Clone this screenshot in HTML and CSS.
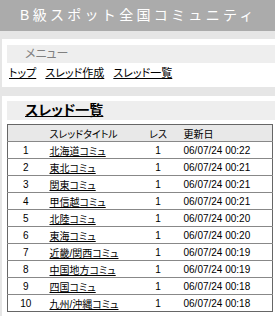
FILE: index.html
```html
<!DOCTYPE html>
<html lang="ja">
<head>
    <meta charset="UTF-8">
    <title>B級スポット全国コミュニティ</title>
    <link rel="stylesheet" href="styles.css">
</head>
<body>
    <h1 class="site-title">B級スポット全国コミュニティ</h1>

    <div class="box menu-box">
        <h2 class="menu-head">メニュー</h2>
        <div class="menu-links">
            <a href="#">トップ</a>
            <a href="#">スレッド作成</a>
            <a href="#">スレッド一覧</a>
        </div>
    </div>

    <div class="box list-box">
        <h2 class="list-head"><a href="#">スレッド一覧</a></h2>
        <table class="threads">
            <colgroup>
                <col class="c-no">
                <col class="c-title">
                <col class="c-res">
                <col class="c-date">
            </colgroup>
            <thead>
                <tr>
                    <th></th>
                    <th class="title">スレッドタイトル</th>
                    <th class="res">レス</th>
                    <th class="date">更新日</th>
                </tr>
            </thead>
            <tbody>
                <tr><td class="no">1</td><td class="title"><a href="#">北海道コミュ</a></td><td class="res">1</td><td class="date">06/07/24 00:22</td></tr>
                <tr><td class="no">2</td><td class="title"><a href="#">東北コミュ</a></td><td class="res">1</td><td class="date">06/07/24 00:21</td></tr>
                <tr><td class="no">3</td><td class="title"><a href="#">関東コミュ</a></td><td class="res">1</td><td class="date">06/07/24 00:21</td></tr>
                <tr><td class="no">4</td><td class="title"><a href="#">甲信越コミュ</a></td><td class="res">1</td><td class="date">06/07/24 00:21</td></tr>
                <tr><td class="no">5</td><td class="title"><a href="#">北陸コミュ</a></td><td class="res">1</td><td class="date">06/07/24 00:20</td></tr>
                <tr><td class="no">6</td><td class="title"><a href="#">東海コミュ</a></td><td class="res">1</td><td class="date">06/07/24 00:20</td></tr>
                <tr><td class="no">7</td><td class="title"><a href="#">近畿/関西コミュ</a></td><td class="res">1</td><td class="date">06/07/24 00:19</td></tr>
                <tr><td class="no">8</td><td class="title"><a href="#">中国地方コミュ</a></td><td class="res">1</td><td class="date">06/07/24 00:19</td></tr>
                <tr><td class="no">9</td><td class="title"><a href="#">四国コミュ</a></td><td class="res">1</td><td class="date">06/07/24 00:18</td></tr>
                <tr><td class="no">10</td><td class="title"><a href="#">九州/沖縄コミュ</a></td><td class="res">1</td><td class="date">06/07/24 00:18</td></tr>
            </tbody>
        </table>
    </div>
</body>
</html>
```

FILE: styles.css
```css
body {
    margin: 0;
    background: #e6e6e6;
    font-family: "Liberation Sans", "Noto Sans CJK JP", sans-serif;
    font-feature-settings: "palt";
    color: #000;
}

a {
    color: #000;
}

.site-title {
    margin: 0;
    height: 31px;
    line-height: 30px;
    padding-left: 20px;
    background: #ababab;
    color: #fff;
    font-size: 14px;
    font-weight: normal;
    font-feature-settings: normal;
    letter-spacing: 3.3px;
}

.box {
    background: #fff;
    margin-left: 2px;
    padding-top: 6px;
}

.menu-box {
    margin-top: 8px;
    height: 42px;
}

.menu-head {
    margin: 0 0 0 5px;
    height: 18px;
    line-height: 18px;
    padding-left: 18px;
    background: #eeeeee;
    color: #808080;
    font-size: 12px;
    font-weight: normal;
}

.menu-links {
    padding: 3px 0 0 7px;
    font-size: 11px;
    line-height: 14px;
}

.menu-links a {
    margin-right: 6px;
}

.list-box {
    margin-top: 9px;
    padding-top: 5px;
    padding-bottom: 10px;
}

.list-head {
    margin: 0 0 4px 5px;
    height: 19px;
    line-height: 19px;
    padding-left: 18px;
    background: #eeeeee;
    font-size: 14px;
    font-weight: bold;
}

.threads {
    margin-left: 5px;
    width: 265px;
    table-layout: fixed;
    border-collapse: collapse;
    border: 1px solid #666;
    font-size: 10px;
}

.c-no { width: 36px; }
.c-title { width: 97px; }
.c-res { width: 35px; }
.c-date { width: 97px; }

.threads th,
.threads td {
    height: 16px;
    padding: 0;
    white-space: nowrap;
    font-weight: normal;
    text-align: left;
}

.threads thead tr {
    background: #e8e8e8;
}

.threads tbody tr {
    border-top: 1px solid #888;
}

.threads .no,
.threads .res {
    text-align: center;
}

.threads .title {
    padding-left: 6px;
}

.threads .date {
    padding-left: 8px;
}
```
